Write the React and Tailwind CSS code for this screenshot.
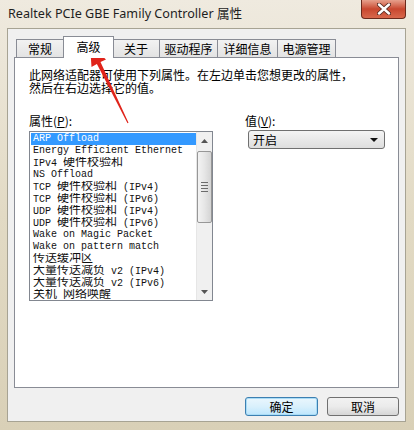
import React from 'react';

const tabs = [
  { label: '常规', w: 'w-[48px]' },
  { label: '高级', w: 'w-[51px]', active: true },
  { label: '关于', w: 'w-[48px]' },
  { label: '驱动程序', w: 'w-[59px]' },
  { label: '详细信息', w: 'w-[61px]' },
  { label: '电源管理', w: 'w-[59px]' },
];

const props = [
  'ARP Offload',
  'Energy Efficient Ethernet',
  'IPv4 硬件校验和',
  'NS Offload',
  'TCP 硬件校验和 (IPv4)',
  'TCP 硬件校验和 (IPv6)',
  'UDP 硬件校验和 (IPv4)',
  'UDP 硬件校验和 (IPv6)',
  'Wake on Magic Packet',
  'Wake on pattern match',
  '传送缓冲区',
  '大量传送减负 v2 (IPv4)',
  '大量传送减负 v2 (IPv6)',
  '关机 网络唤醒',
];

// SimSun-ish: half width ascii, full width CJK
const mixed = (s) =>
  s.split(/([\u3000-\u9fff]+)/).filter(Boolean).map((p, i) =>
    /[\u3000-\u9fff]/.test(p) ? (
      <span key={i} className="text-[12px]">{p}</span>
    ) : (
      <span key={i}>{p}</span>
    )
  );

const Tab = ({ label, w, active }) => (
  <div
    className={
      active
        ? `${w} h-[22px] -mb-px -mx-px relative z-10 bg-white border border-b-0 border-[#898c95] flex items-start justify-center pt-[1px]`
        : `${w} h-[18px] -ml-px first:ml-0 bg-gradient-to-b from-[#f2f2f2] to-[#e3e3e3] border border-b-0 border-[#898c95] flex items-start justify-center`
    }
  >
    <span className="text-[12px] leading-[17px] text-black">{label}</span>
  </div>
);

const Scrollbar = () => (
  <div className="w-[16px] h-full bg-[#f0f0f0] flex flex-col items-center border-l border-[#e6e6e6]">
    <div className="h-[17px] w-full flex items-center justify-center">
      <svg width="7" height="4" viewBox="0 0 7 4"><path d="M0 4 L3.5 0 L7 4 Z" fill="#555" /></svg>
    </div>
    <div className="mt-[2px] h-[72px] w-[15px] rounded-[2px] border border-[#979797] bg-gradient-to-r from-[#f3f3f3] via-[#e6e6e6] to-[#d4d4d4] flex flex-col items-center justify-center gap-[2px]">
      <div className="w-[7px] h-px bg-[#6b6b6b]" />
      <div className="w-[7px] h-px bg-[#6b6b6b]" />
      <div className="w-[7px] h-px bg-[#6b6b6b]" />
      <div className="w-[7px] h-px bg-[#6b6b6b]" />
    </div>
    <div className="flex-1" />
    <div className="h-[17px] w-full flex items-center justify-center">
      <svg width="7" height="4" viewBox="0 0 7 4"><path d="M0 0 L3.5 4 L7 0 Z" fill="#555" /></svg>
    </div>
  </div>
);

export default function App() {
  return (
    <div className="relative w-[414px] h-[430px] overflow-hidden bg-gradient-to-b from-[#efeadf] via-[#e2dac4] to-[#d9d0b7] font-['Noto_Sans','Noto_Sans_CJK_SC',sans-serif] text-black">
      {/* title bar */}
      <div className="h-[28px] flex items-center pl-[8px] pt-[1px]">
        <span className="text-[12.6px] text-[#1e1e1e]">Realtek PCIe GBE Family Controller 属性</span>
      </div>
      <div className="absolute top-0 left-[361px] w-[45px] h-[19px] rounded-b-[4px] border border-t-0 border-[#6b2a1c] bg-gradient-to-b from-[#e6a08c] via-[#c8472f] to-[#d8684c] flex items-center justify-center">
        <svg width="14" height="12" viewBox="0 0 14 12">
          <path d="M2 1.5 L12 10.5 M12 1.5 L2 10.5" stroke="#5a2a20" strokeWidth="4.2" strokeLinecap="round" />
          <path d="M2 1.5 L12 10.5 M12 1.5 L2 10.5" stroke="#ffffff" strokeWidth="2.4" strokeLinecap="round" />
        </svg>
      </div>

      {/* client area */}
      <div className="ml-[7px] w-[399px] h-[394px] bg-[#f0f0f0] border border-[#a7a393] flex flex-col font-['Noto_Sans_CJK_SC',sans-serif]">
        <div className="h-[21px] mt-[7px] pl-[8px] flex items-end">
          {tabs.map((t) => (
            <Tab key={t.label} {...t} />
          ))}
        </div>

        <div className="ml-[6px] w-[385px] h-[331px] bg-white border border-[#898c95] flex flex-col pl-[14px] pt-[10px]">
          <p className="text-[12px] leading-[13px]">
            此网络适配器可使用下列属性。在左边单击您想更改的属性，
            <br />
            然后在右边选择它的值。
          </p>

          <div className="mt-[20px] flex">
            <div className="w-[184px] flex flex-col">
              <span className="text-[12px] leading-[13px]">属性(<span className="underline">P</span>):</span>
              <div className="mt-[4px] h-[170px] border border-[#828790] flex">
                <div className="flex-1 pl-px pt-px font-['Liberation_Mono','Noto_Sans_CJK_SC',monospace] text-[10px] leading-[12px] text-[#111]">
                  {props.map((p, i) => (
                    <div
                      key={p}
                      className={
                        i === 0
                          ? 'h-[12px] pl-[2px] bg-[#3399ff] text-white whitespace-nowrap overflow-hidden'
                          : 'h-[12px] pl-[2px] whitespace-nowrap overflow-hidden'
                      }
                    >
                      {mixed(p)}
                    </div>
                  ))}
                </div>
                <Scrollbar />
              </div>
            </div>

            <div className="ml-[32px] flex flex-col">
              <span className="text-[12px] leading-[13px]">值(<span className="underline">V</span>):</span>
              <div className="mt-[3px] ml-[3px] w-[137px] h-[19px] rounded-[3px] border border-[#707070] bg-gradient-to-b from-[#f4f4f4] to-[#dedede] flex items-center justify-between pl-[4px] pr-[6px]">
                <span className="text-[12px] leading-[13px]">开启</span>
                <svg width="8" height="4" viewBox="0 0 8 4"><path d="M0 0 L8 0 L4 4 Z" fill="#111" /></svg>
              </div>
            </div>
          </div>
        </div>

        <div className="mt-[9px] pr-[6px] flex justify-end gap-[9px]">
          <button className="w-[73px] h-[19px] rounded-[3px] border border-[#3c7fb1] bg-gradient-to-b from-[#eaf6fd] via-[#d9f0fc] to-[#bde6fd] shadow-[inset_0_0_0_1px_#a9dcf6] text-[12px] leading-[13px]">
            确定
          </button>
          <button className="w-[72px] h-[19px] rounded-[3px] border border-[#707070] bg-gradient-to-b from-[#f2f2f2] via-[#ebebeb] to-[#d6d6d6] text-[12px] leading-[13px]">
            取消
          </button>
        </div>
      </div>

      {/* red annotation arrow */}
      <svg className="absolute left-0 top-0 pointer-events-none" width="414" height="430" viewBox="0 0 414 430">
        <polygon
          points="90,45 106,59.5 100.5,62.1 128.5,122.8 127.5,123.2 96.9,63.9 91.5,67"
          fill="#e0241b"
        />
      </svg>
    </div>
  );
}
